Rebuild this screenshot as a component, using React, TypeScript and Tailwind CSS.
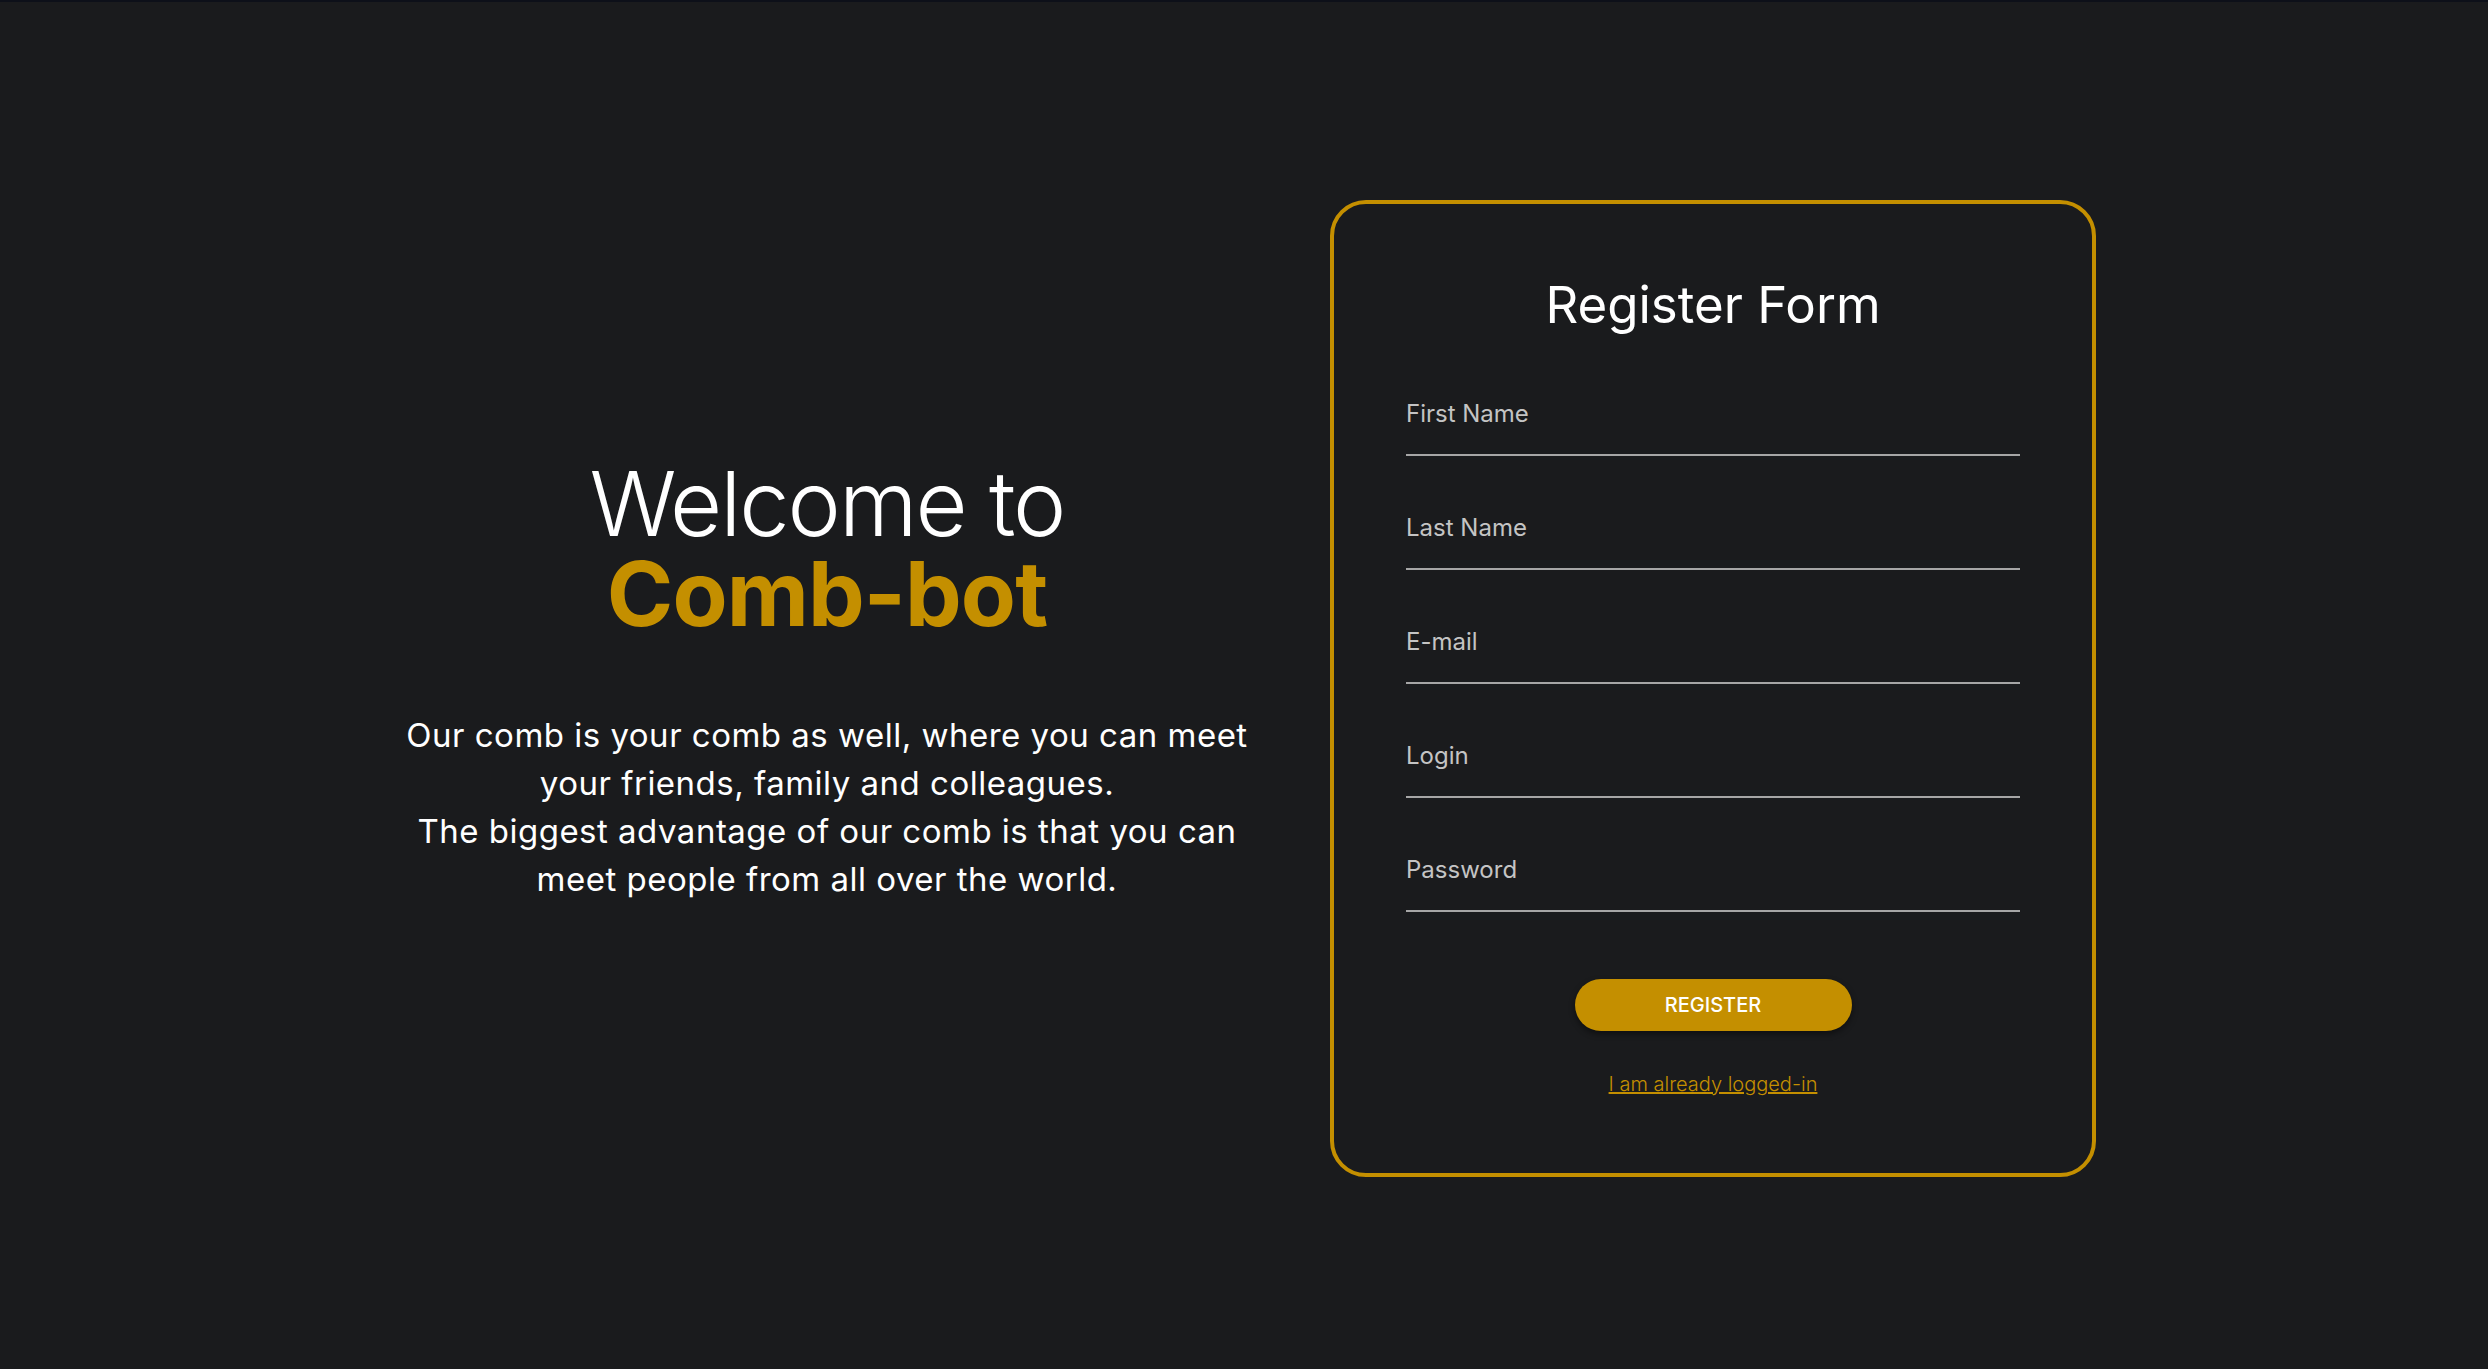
import React from "react";

const fields = ["First Name", "Last Name", "E-mail", "Login", "Password"];

export default function App() {
  return (
    <div className="min-h-screen bg-[#1a1b1d] flex flex-col font-['Inter',_'Noto_Sans',_sans-serif]">
      <div className="h-[2px] bg-[#0d1019]" />
      <div className="flex-1 flex items-center justify-center gap-[68px] pt-[6px]">
        <div className="w-[870px] text-center text-white pb-[16px]">
          <h1 className="text-[90px] leading-[90px]">
            <span className="block font-light tracking-[-0.022em]">Welcome to</span>
            <span className="block font-bold tracking-[-0.01em] text-[#c48f00]">Comb-bot</span>
          </h1>
          <p className="mt-[72px] text-[33px] leading-[48px] tracking-[0.015em] whitespace-nowrap">
            Our comb is your comb as well, where you can meet
            <br />
            your friends, family and colleagues.
            <br />
            The biggest advantage of our comb is that you can
            <br />
            meet people from all over the world.
          </p>
        </div>
        <form
          className="w-[766px] border-[4px] border-[#c48f00] rounded-[36px] px-[72px] pt-[69px] pb-[75px] flex flex-col"
          onSubmit={(e) => e.preventDefault()}
        >
          <h2 className="text-[51px] leading-[64px] text-center text-white">Register Form</h2>
          <div className="mt-[61px] flex flex-col gap-[56px]">
            {fields.map((f) => (
              <label key={f} className="flex flex-col">
                <span className="text-[24px] leading-[32px] text-[#c4c4c4]">{f}</span>
                <input
                  type={f === "Password" ? "password" : "text"}
                  className="h-[26px] bg-transparent border-b-2 border-[#a6a6a6] outline-none text-white text-[20px]"
                />
              </label>
            ))}
          </div>
          <button
            type="submit"
            className="mt-[67px] self-center w-[277px] h-[52px] rounded-full bg-[#c48f00] text-white text-[20px] font-medium shadow-[0_3px_6px_rgba(0,0,0,0.45)]"
          >
            REGISTER
          </button>
          <a
            href="#"
            className="mt-[39px] self-center text-[20px] leading-[28px] text-[#c48f00] underline font-light"
          >
            I am already logged-in
          </a>
        </form>
      </div>
    </div>
  );
}
